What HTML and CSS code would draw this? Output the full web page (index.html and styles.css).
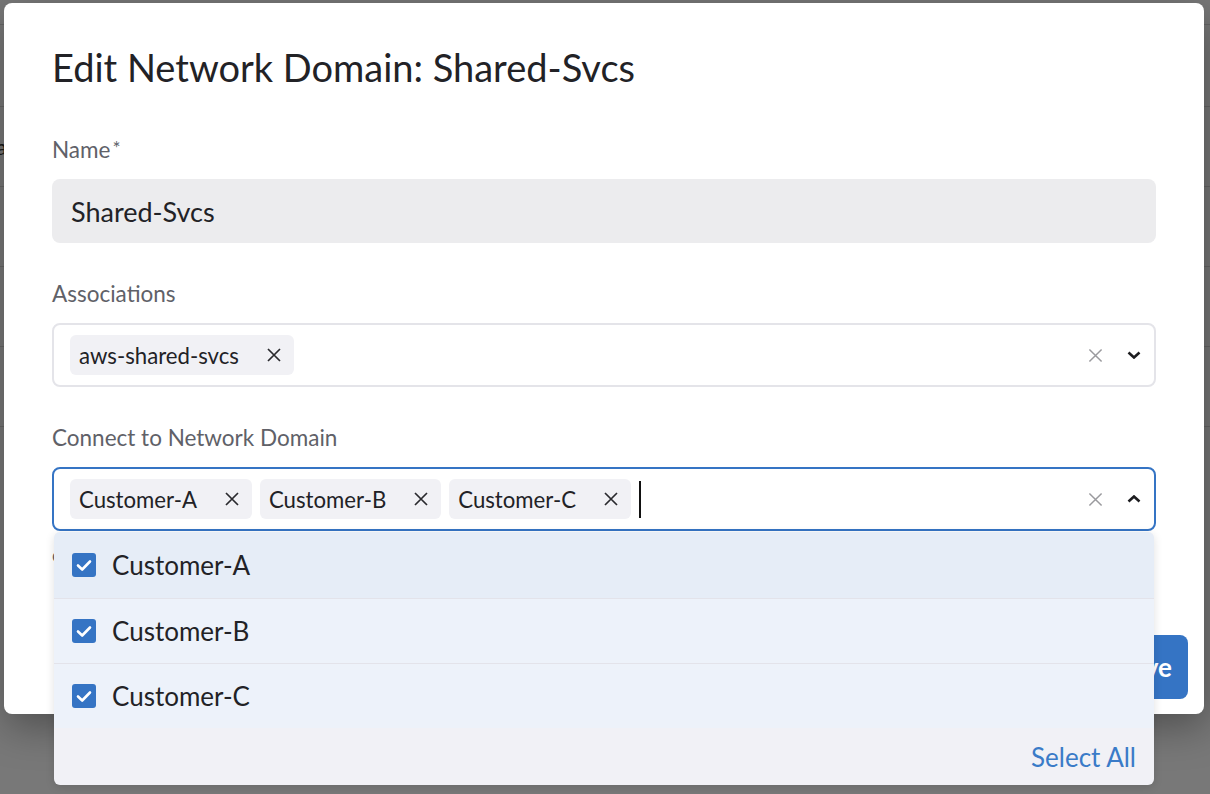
FILE: index.html
```html
<!DOCTYPE html>
<html>
<head>
<meta charset="utf-8">
<link rel="stylesheet" href="styles.css">
</head>
<body>
<div class="page">
  <div class="page-top"></div>
  <div class="page-row"><span class="frag">.</span></div>
  <div class="page-row"><span class="frag">ta</span></div>
  <div class="page-row"><span class="frag">.</span></div>
  <div class="page-row"></div>
  <div class="page-row"></div>
</div>
<div class="overlay"></div>

<div class="modal">
  <div class="modal-body">
    <h1 class="title">Edit Network Domain: Shared-Svcs</h1>

    <div class="field">
      <div class="label">Name<span class="req">*</span></div>
      <div class="input">Shared-Svcs</div>
    </div>

    <div class="field">
      <div class="label">Associations</div>
      <div class="select">
        <div class="chips">
          <span class="chip"><span class="chip-text">aws-shared-svcs</span>
            <svg class="chip-x" viewBox="0 0 16 16"><path d="M2 2 L14 14 M14 2 L2 14"/></svg>
          </span>
        </div>
        <div class="indicators">
          <svg class="clear-x" viewBox="0 0 16 16"><path d="M1.5 1.5 L14.5 14.5 M14.5 1.5 L1.5 14.5"/></svg>
          <svg class="chev" viewBox="0 0 14 8"><path d="M1.5 1.5 L7 6.5 L12.5 1.5"/></svg>
        </div>
      </div>
    </div>

    <div class="field">
      <div class="label">Connect to Network Domain</div>
      <div class="select select-focused">
        <div class="chips">
          <span class="chip"><span class="chip-text">Customer-A</span>
            <svg class="chip-x" viewBox="0 0 16 16"><path d="M2 2 L14 14 M14 2 L2 14"/></svg>
          </span>
          <span class="chip"><span class="chip-text">Customer-B</span>
            <svg class="chip-x" viewBox="0 0 16 16"><path d="M2 2 L14 14 M14 2 L2 14"/></svg>
          </span>
          <span class="chip"><span class="chip-text">Customer-C</span>
            <svg class="chip-x" viewBox="0 0 16 16"><path d="M2 2 L14 14 M14 2 L2 14"/></svg>
          </span>
          <span class="caret"></span>
        </div>
        <div class="indicators">
          <svg class="clear-x" viewBox="0 0 16 16"><path d="M1.5 1.5 L14.5 14.5 M14.5 1.5 L1.5 14.5"/></svg>
          <svg class="chev" viewBox="0 0 14 8"><path d="M1.5 6.5 L7 1.5 L12.5 6.5"/></svg>
        </div>

        <div class="menu">
          <div class="option option-active">
            <span class="check"><svg viewBox="0 0 24 24"><path d="M6 12.5 L10.2 16.5 L18 8.5"/></svg></span>
            <span class="option-text">Customer-A</span>
          </div>
          <div class="option">
            <span class="check"><svg viewBox="0 0 24 24"><path d="M6 12.5 L10.2 16.5 L18 8.5"/></svg></span>
            <span class="option-text">Customer-B</span>
          </div>
          <div class="option">
            <span class="check"><svg viewBox="0 0 24 24"><path d="M6 12.5 L10.2 16.5 L18 8.5"/></svg></span>
            <span class="option-text">Customer-C</span>
          </div>
          <div class="menu-footer"><span class="select-all">Select All</span></div>
        </div>
      </div>
      <div class="help">connected domains can exchange routes</div>
    </div>
  </div>
  <div class="modal-footer">
    <button class="btn-save">Save</button>
  </div>
</div>
</body>
</html>
```

FILE: styles.css
```css
* { box-sizing: border-box; }
html, body { margin: 0; padding: 0; }
body {
  width: 1210px;
  height: 794px;
  overflow: hidden;
  position: relative;
  font-family: Lato, "Liberation Sans", sans-serif;
  background: #ffffff;
}

.page { width: 1210px; }
.page-top { height: 25px; border-bottom: 1px solid #dcdcdc; }
.page-row {
  height: 80px;
  border-bottom: 1px solid #dcdcdc;
  display: flex;
  align-items: center;
  font-size: 22px;
  color: #333;
}
.page-row:nth-child(2) { height: 82px; }
.frag { margin-left: -12px; }

.overlay {
  position: absolute;
  inset: 0;
  background: rgba(0, 0, 0, 0.53);
}

.modal {
  position: absolute;
  left: 4px;
  top: 3px;
  width: 1200px;
  height: 711px;
  background: #ffffff;
  border-radius: 8px;
  box-shadow: 2px 12px 40px rgba(0, 0, 0, 0.35);
  display: flex;
  flex-direction: column;
}
.modal-body { padding: 40px 48px 0; }

.title {
  margin: 0 0 46px;
  font-size: 38px;
  line-height: 48px;
  font-weight: 400;
  color: #222226;
}

.field { margin-bottom: 38px; }
.label {
  height: 26px;
  font-size: 22.5px;
  line-height: 26px;
  color: #606168;
  margin-bottom: 16px;
}
.req { font-size: 19px; line-height: 0; vertical-align: 3px; margin-left: 2px; }

.input {
  height: 64px;
  border-radius: 8px;
  background: #ececee;
  padding: 0 19px;
  display: flex;
  align-items: center;
  font-size: 27px;
  color: #222226;
}

.select {
  position: relative;
  height: 64px;
  border: 2px solid #e4e4e9;
  border-radius: 8px;
  padding: 0 13px 0 16px;
  display: flex;
  align-items: center;
}
.select-focused { border-color: #3574c4; }

.chips {
  flex: 1;
  display: flex;
  align-items: center;
  gap: 8px;
}
.chip {
  height: 40px;
  border-radius: 6px;
  background: #f1f1f5;
  display: flex;
  align-items: center;
  padding: 0 12px 0 9px;
  font-size: 22.2px;
  color: #222226;
}
.chip-x {
  width: 16px;
  height: 16px;
  margin-left: 27px;
  fill: none;
  stroke: #2a2a2e;
  stroke-width: 1.7;
}
.caret {
  width: 2px;
  height: 37px;
  background: #111;
}

.indicators {
  display: flex;
  align-items: center;
  gap: 24px;
}
.clear-x {
  width: 15px;
  height: 15px;
  fill: none;
  stroke: #9a9a9e;
  stroke-width: 1.6;
}
.chev {
  width: 14px;
  height: 8px;
  fill: none;
  stroke: #1d1d20;
  stroke-width: 2.6;
}

.menu {
  position: absolute;
  left: 0;
  right: 0;
  top: calc(100% + 3px);
  z-index: 5;
  border-radius: 6px;
  overflow: hidden;
  background: #f1f1f6;
  box-shadow: 0 2px 10px rgba(0, 0, 0, 0.12);
}
.option {
  height: 65px;
  display: flex;
  align-items: center;
  padding-left: 18px;
  background: #edf2fa;
  border-top: 1px solid #e3e3ea;
}
.option:first-child { border-top: 0; height: 66px; background: #e6edf7; }
.check {
  width: 24px;
  height: 24px;
  border-radius: 3px;
  background: #3574c4;
  display: flex;
}
.check svg {
  width: 24px;
  height: 24px;
  fill: none;
  stroke: #ffffff;
  stroke-width: 2.6;
  stroke-linecap: round;
  stroke-linejoin: round;
}
.option-text {
  margin-left: 16px;
  font-size: 26px;
  color: #222226;
}
.menu-footer {
  height: 57px;
  display: flex;
  align-items: center;
  justify-content: flex-end;
  padding-right: 18px;
}
.select-all {
  font-size: 26px;
  color: #3a7bc8;
}

.help {
  margin-top: 12px;
  font-size: 19px;
  color: #606168;
}

.modal-footer {
  margin-top: auto;
  padding: 0 16px 15px;
  display: flex;
  justify-content: flex-end;
}
.btn-save {
  height: 64px;
  padding: 0 16px;
  border: 0;
  border-radius: 8px;
  background: #3574c4;
  color: #ffffff;
  font-family: Lato, "Liberation Sans", sans-serif;
  font-size: 26px;
  font-weight: 700;
}
```
